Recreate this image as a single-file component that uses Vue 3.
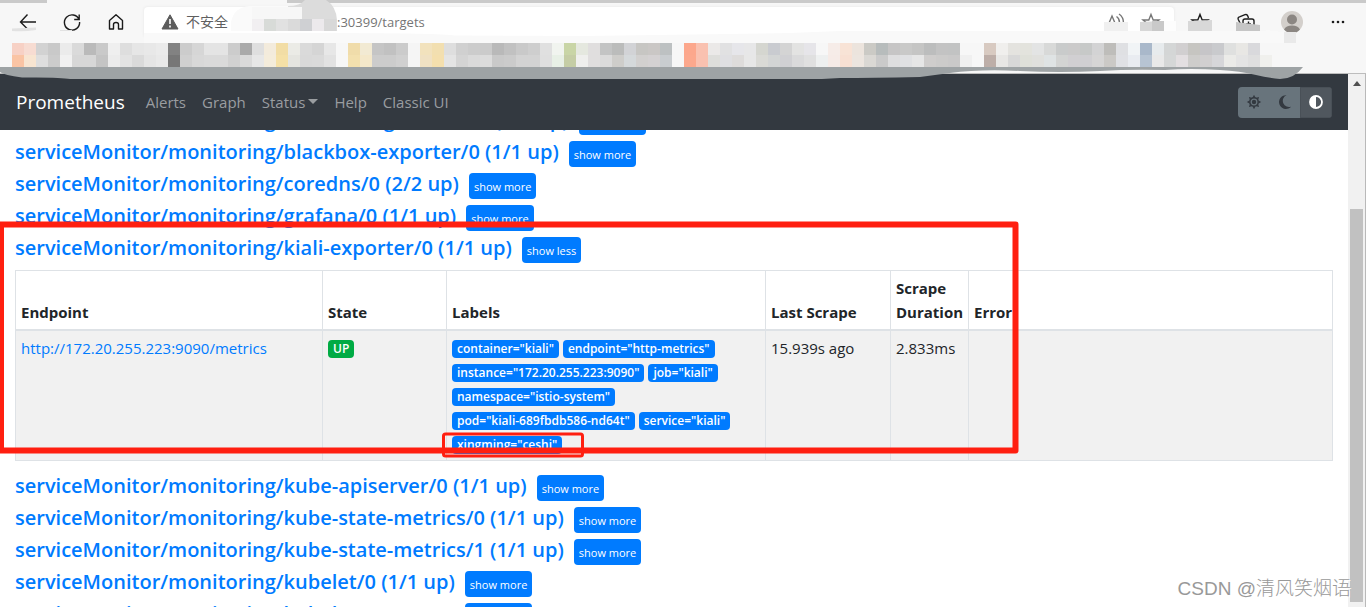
<script setup>
import { ref } from 'vue'

const address = ref(':30399/targets')

const topCells = (
  'f7d1c5 f7dcd2 d2d2d2 c9c9c9 ebebeb dadada bababa c9c9c9 efefef dedede e6e6e6 e8e8e8 ebebeb 828282 cccccc d6d6d6 e4e4e4 e4e4e4 cccccc aaaaaa dfdfdf f3ebdc f2dda5 ebebe6 dadada d5d5d5 e7e7e7 f7f7f7 f0dcaa f2ead3 c5c5c5 c1c1c1 cbcbcb f5f5f5 f2e2bd f2dfb0 dedede ' +
  'd0d0d0 cccccc cbcbcb b9b9b9 c1c1c1 c9c9c9 cecece e0e0e0 f1f4ef c9d5a6 e5e8df e0dede c3c4c4 bbbcbb d2d3d6 c7c6c3 cac7c5 bdc1c2 f7f7f7 fca78c f9c1b0 ebe9e8 e1e1e2 e6e6ea e7e7e8 d5d6d0 c9cbd0 d4d4d4 e3e3e2 e6e5e9 f7f7f7 f6ece8 f8e3d6 ece4dd cbcac5 b7bcbc c6c5c5 c9c9c8 ' +
  'c5c5c4 bcbdbd c3c3c3 c2c3c3 f7f7f7 f7f7f7 d8cac1 f0efed e4e3df e3e3dd e3e4e4 d8d9d8 c9cbcb cbcaca c7c9c8 d3d3d4 bebdba dfe0e3 f1f4f6 a9b8ca e7ebed d4d6d6 d1cfd0 c6c5c1 c6c5c8 c9cacd dfe0df e8e7e4 d9d9dc f7f7f7'
).split(' ')

const bottomCells = (
  'fac4a4 f8e5d1 dedede cccccc f1f1f1 d7d7d7 d7d7d7 c4c4c4 ececec e3e3e3 dadada e5e5e5 e9e9e9 777777 d0d0d0 d8d8d8 dadada dadada d1d1d1 dadada e7e7e7 f4ecdb f5e0a6 e5e5e0 d9d9d9 dadada e2e2e2 f7f7f7 f3e0ae f4e8ca cccccc cccccc d0d0d0 f5f5f5 f0e1c3 f4dfad e4e4e4 ' +
  'd4d4d4 dadada dcdcdc c9c9c9 cbcbcb d3d3d3 d3d3d3 dfdfdf e8f0e6 c5cda5 efefed e0dede dbdbdb cecdca d5d9db d2d0cf d4d1d2 c9cdd0 f7f7f7 fca88d f9c1b0 dededb dfdfe2 dedcdb e7e7e7 dadad6 d3d5d5 d0d0d3 dadadb e0e0e0 eef0f0 f6ebe7 f8e0d3 ece5df dad8d4 cacaca dededf e0e1e3 ' +
  'e6e6e6 cfcdcc cccbca cac9c9 f0f0f0 f7f7f7 bdaea8 e8e7e5 d8d8d8 dfe0d9 e0e0dd dfe3e4 d3d4d3 d1cfd2 d0cfd2 d6d5d5 cbc9c6 e0e1e5 e9ecf1 b7c4d3 e9e9e9 d5d7d7 e3dfe1 cecdcb d1cfd0 d6d6d9 ebebe8 e4e4e4 dfdfdf f0f0ed'
).split(' ')

const cells = [topCells, bottomCells].flatMap((row, r) =>
  row.map((c, i) => ({ x: i * 12, y: r * 12, fill: '#' + c }))
)

const blurCells = [
  [252, 19, '#f1eff1'], [264, 19, '#d8dbd8'], [276, 19, '#e1e1e1'], [288, 19, '#dadada'],
  [300, 19, '#cfd0d3'], [312, 19, '#ece9ec'], [324, 19, '#d8d8d8'],
].map(([x, y, fill]) => ({ x, y, fill }))

const pool = (name, up) => ({ name: `serviceMonitor/monitoring/${name}`, up })
const before = [
  pool('alertmanager-main/0', '1/1'),
  pool('blackbox-exporter/0', '1/1'),
  pool('coredns/0', '2/2'),
  pool('grafana/0', '1/1'),
]
const open = pool('kiali-exporter/0', '1/1')
const after = [
  pool('kube-apiserver/0', '1/1'),
  pool('kube-state-metrics/0', '1/1'),
  pool('kube-state-metrics/1', '1/1'),
  pool('kubelet/0', '1/1'),
  pool('kubelet/1', '1/1'),
]

const labels = [
  'container="kiali"',
  'endpoint="http-metrics"',
  'instance="172.20.255.223:9090"',
  'job="kiali"',
  'namespace="istio-system"',
  'pod="kiali-689fbdb586-nd64t"',
  'service="kiali"',
  'xingming="ceshi"',
]
const teeth = [0, 45, 90, 135, 180, 225, 270, 315]
</script>

<template>
  <div class="window">
    <header class="chrome">
      <div class="tabstrip"><span class="tab"></span></div>
      <div class="toolbar">
        <button class="tool" aria-label="Back">
          <svg width="20" height="20" viewBox="0 0 20 20"><path d="M18 10H3M9.500 2.500 2.500 10l7 7" /></svg>
        </button>
        <button class="tool" aria-label="Refresh">
          <svg width="20" height="20" viewBox="0 0 20 20"><path d="M17 7.500A7.600 7.600 0 1 0 17.600 10M17.200 2.500v5h-5" /></svg>
        </button>
        <button class="tool" aria-label="Home">
          <svg width="20" height="20" viewBox="0 0 20 20"><path d="M3.500 8.500 10 2.800l6.500 5.700V17h-4v-4.500q0-2-2.500-2t-2.500 2V17h-4z" stroke-linejoin="round" /></svg>
        </button>
        <div class="omnibox">
          <svg class="warn" width="18" height="16" viewBox="0 0 18 16"><path d="M9 .8 17 15H1z" fill="#5c5c5c" stroke="#5c5c5c" stroke-linejoin="round" /><path d="M9 5v5M9 11.500v2" stroke="#fff" stroke-width="1.600" /></svg>
          <label class="unsafe" for="address">不安全</label>
          <input id="address" v-model="address" class="address" type="text" spellcheck="false" />
          <button class="inner" aria-label="Read aloud">
            <svg width="20" height="20" viewBox="0 0 20 20"><path d="M1.500 17 7 4l5.500 13M4 12h6M11.500 4.500q3 2 3 6M14 2q4.500 3 4.500 9" /></svg>
          </button>
          <button class="inner" aria-label="Add favorite">
            <svg width="20" height="20" viewBox="0 0 20 20"><path d="M10 2.500 12.200 8H18l-4.500 3.800 1.700 5.700L10 14.200l-5.200 3.300 1.700-5.700L2 8h5.800z" /></svg>
          </button>
        </div>
        <button class="tool wide" aria-label="Favorites">
          <svg width="20" height="20" viewBox="0 0 20 20"><path d="M10 2.500 12.200 8H18l-4.500 3.800 1.700 5.700L10 14.200l-5.200 3.300 1.700-5.700L2 8h5.800z" /></svg>
        </button>
        <button class="tool wide" aria-label="Collections">
          <svg width="20" height="20" viewBox="0 0 20 20"><path d="M4.500 12 2.300 7.500Q1.500 5.500 3.500 4.800L9 2.700q2-.7 2.800 1.300l.7 2M7 16V9q0-2 2-2h7q2 0 2 2v6q0 2-2 2H9q-2 0-2-2M12.500 9.500v5M10 12h5" /></svg>
        </button>
        <button class="tool wide" aria-label="Profile">
          <svg width="24" height="24" viewBox="0 0 24 24"><circle cx="12" cy="12" r="11" fill="#d3cfcb" stroke="none" /><circle cx="12" cy="9.500" r="5" fill="#8b8682" stroke="none" /><path d="M4 19.500q2-4 8-4t8 4q-3 3.500-8 3.500t-8-3.500z" fill="#8b8682" stroke="none" /></svg>
        </button>
        <button class="tool wide" aria-label="Settings and more">
          <svg width="16" height="4" viewBox="0 0 16 4"><g fill="#1b1b1b" stroke="none"><circle cx="3" cy="2" r="1.300" /><circle cx="8" cy="2" r="1.300" /><circle cx="13" cy="2" r="1.300" /></g></svg>
        </button>
      </div>
      <div class="bookmarks">
        <svg width="1260" height="24" shape-rendering="crispEdges" aria-hidden="true">
          <rect v-for="(c, i) in cells" :key="i" :x="c.x" :y="c.y" width="12" height="12" :fill="c.fill" />
        </svg>
      </div>
      <svg class="smudges" width="1366" height="80" aria-hidden="true">
        <path d="M144 33H330Q440 33 455 35.500L585 36 790 33 840 31H1266V30L1290 33V43H144z" fill="#f9f9f9" />
        <path d="M231 31V22Q234 7 250 6H300V31z" fill="#fafafa" />
        <path d="M288 6Q300 6 305 0h21q10 6 11 20v11H290z" fill="#dcdcdc" />
        <path d="M252 7h50v12h-50z" fill="#f7f7f7" />
        <rect v-for="(c, i) in blurCells" :key="i" :x="c.x" :y="c.y" width="12" height="12" :fill="c.fill" />
        <path d="M12 28.500l24-1V30q-12 2-24 1zM60 30h12v1H60z" fill="#e2e2e2" />
        <path d="M1104 22h24v9h-24z" fill="#f0f0f0" />
        <path d="M1140 22l24-1v10h-24z" fill="#d7d7d7" />
        <path d="M1152 21h12v10h-12z" fill="#c9c9c9" />
        <path d="M1164 21h12v10h-12z" fill="#fdfdfd" />
        <path d="M1188 21l24-1v11h-24z" fill="#d8d8d8" />
        <path d="M1236 22l24 3v6h-24z" fill="#c6c6c6" />
        <path d="M1284 32h12v11h-12z" fill="#e9e9e9" />
        <path d="M0 67H1303Q1294 79 1280 79 1268 78 1256 75 1240 71 1220 70 1190 68 1165 70 1130 69 1100 71 1060 73 1020 71 980 69 950 73 935 75 920 77 870 78 840 78L822 79H70Q60 77 22 77.500 4 75 0 72z" fill="#9ea3a5" />
      </svg>
    </header>

    <div class="viewport">
      <main class="page">
        <nav class="navbar">
          <a class="brand" href="#">Prometheus</a>
          <a class="link" href="#">Alerts</a>
          <a class="link" href="#">Graph</a>
          <a class="link" href="#">Status<span class="caret"></span></a>
          <a class="link" href="#">Help</a>
          <a class="link" href="#">Classic UI</a>
          <div class="themes">
            <button class="theme" aria-label="Light theme">
              <svg width="16" height="16" viewBox="0 0 16 16">
                <circle cx="8" cy="8" r="4.200" fill="none" stroke="#333940" stroke-width="1.500" />
                <circle cx="8" cy="8" r="2.200" fill="#333940" />
                <path v-for="a in teeth" :key="a" d="M6.600 3.500 8 .8l1.400 2.700z" fill="#333940" :transform="`rotate(${a} 8 8)`" />
              </svg>
            </button>
            <button class="theme" aria-label="Dark theme">
              <svg width="16" height="16" viewBox="0 0 16 16"><path d="M9.500 1.200A6.900 6.900 0 1 0 14.300 12.400 6 6 0 0 1 9.500 1.200z" fill="#333940" /></svg>
            </button>
            <button class="theme active" aria-label="Browser theme">
              <svg width="16" height="16" viewBox="0 0 16 16"><circle cx="8" cy="8" r="6" fill="none" stroke="#fff" stroke-width="1.800" /><path d="M8 2a6 6 0 0 0 0 12z" fill="#fff" /></svg>
            </button>
          </div>
        </nav>

        <div class="scroll">
          <div class="content">
            <div v-for="p in before" :key="p.name" class="pool">
              <h3><a href="#">{{ p.name }} ({{ p.up }} up)</a></h3>
              <button class="toggle">show more</button>
            </div>
            <div class="pool">
              <h3><a href="#">{{ open.name }} ({{ open.up }} up)</a></h3>
              <button class="toggle">show less</button>
            </div>
            <table class="targets">
              <colgroup>
                <col class="c-endpoint" /><col class="c-state" /><col class="c-labels" /><col class="c-last" /><col class="c-duration" /><col />
              </colgroup>
              <thead>
                <tr><th>Endpoint</th><th>State</th><th>Labels</th><th>Last Scrape</th><th>Scrape Duration</th><th>Error</th></tr>
              </thead>
              <tbody>
                <tr>
                  <td><a href="#">http://172.20.255.223:9090/metrics</a></td>
                  <td><div class="badges"><span class="badge up">UP</span></div></td>
                  <td><div class="badges"><span v-for="l in labels" :key="l" class="badge">{{ l }}</span></div></td>
                  <td>15.939s ago</td>
                  <td>2.833ms</td>
                  <td></td>
                </tr>
              </tbody>
            </table>
            <div v-for="p in after" :key="p.name" class="pool">
              <h3><a href="#">{{ p.name }} ({{ p.up }} up)</a></h3>
              <button class="toggle">show more</button>
            </div>
          </div>
        </div>
      </main>
      <div class="scrollbar" aria-hidden="true">
        <svg width="10" height="5" viewBox="0 0 10 5"><path d="M5 0 9 5H1z" fill="#505050" /></svg>
        <div class="thumb"></div>
      </div>
    </div>

    <svg class="marks" width="1030" height="250" aria-hidden="true">
      <g fill="none" stroke="#ff1f10" stroke-linejoin="round">
        <path d="M1 4.500H1015.500V230.500H1z" stroke-width="6" />
        <rect x="443.500" y="214" width="139" height="22" rx="2" stroke-width="3" />
      </g>
    </svg>
    <div class="watermark">CSDN @清风笑烟语</div>
  </div>
</template>

<style>
html,
body {
  margin: 0;
  overflow: hidden;
}
</style>

<style scoped>
.window {
  position: relative;
  display: flex;
  flex-direction: column;
  height: 100vh;
  overflow: hidden;
  background: #fff;
  color: #212529;
  font: 15px/24px "Open Sans", "Noto Sans CJK SC", sans-serif;
}
a {
  color: #007bff;
  text-decoration: none;
}
button {
  border: 0;
  padding: 0;
  font-family: inherit;
  cursor: pointer;
}
.chrome {
  position: relative;
  z-index: 2;
  background: #f7f7f7;
  border-bottom: 1px solid #bdbdbd;
}
.tabstrip {
  height: 3px;
  background: #cacaca;
}
.tab {
  display: block;
  width: 240px;
  height: 3px;
  margin-left: 47px;
  background: #f7f7f7;
}
.toolbar {
  display: flex;
  align-items: center;
  height: 38px;
  padding: 0 5px 0 6px;
}
.tool,
.inner {
  display: flex;
  flex: none;
  align-items: center;
  justify-content: center;
  width: 44px;
  height: 30px;
  background: none;
}
.wide {
  width: 46px;
}
.inner {
  width: 36px;
}
.tool svg,
.inner svg {
  fill: none;
  stroke: #1b1b1b;
  stroke-width: 1.4;
}
.inner svg {
  stroke: #777;
}
.omnibox {
  display: flex;
  flex: 1;
  align-items: center;
  height: 30px;
  margin: 0 3px 0 6px;
  padding: 0 5px 0 17px;
  background: #fff;
  border-radius: 4px;
  box-shadow: 0 0 3px #e4e4e4;
}
.warn {
  flex: none;
}
.unsafe {
  margin: 0 109px 0 7px;
  color: #5f5f5f;
  font-size: 14px;
  white-space: nowrap;
}
.address {
  flex: 1;
  min-width: 0;
  padding: 0;
  border: 0;
  outline: 0;
  background: none;
  color: #757575;
  font: 13px/20px "Open Sans", sans-serif;
}
.bookmarks {
  height: 24px;
  margin-top: 2px;
  padding: 0 0 6px 12px;
  overflow: hidden;
}
.bookmarks svg {
  display: block;
}
.smudges {
  position: absolute;
  top: 0;
  left: 0;
  pointer-events: none;
}
.viewport {
  display: flex;
  flex: 1;
  min-height: 0;
}
.page {
  display: flex;
  flex: 1;
  flex-direction: column;
  min-width: 0;
}
.navbar {
  display: flex;
  flex: none;
  align-items: center;
  gap: 16px;
  height: 56px;
  padding: 0 16px;
  background: #333940;
  box-sizing: border-box;
}
.brand {
  margin-right: 5px;
  color: #fff;
  font-size: 19px;
}
.link {
  color: #9a9da0;
}
.caret {
  display: inline-block;
  margin-left: 3px;
  vertical-align: 4px;
  border: 5px solid transparent;
  border-top-color: #9a9da0;
  border-bottom: 0;
}
.themes {
  display: flex;
  margin-left: auto;
  overflow: hidden;
  border-radius: 4px;
}
.theme {
  display: flex;
  align-items: center;
  justify-content: center;
  width: 31px;
  height: 31px;
  background: #68747c;
}
.theme.active {
  width: 32px;
  background: #50575e;
  border: 1px solid #495057;
}
.scroll {
  flex: 1;
  min-height: 0;
  overflow: hidden;
}
.content {
  margin-top: -24px;
  padding: 0 15px;
}
.pool {
  display: flex;
  align-items: flex-start;
  gap: 10px;
  height: 32px;
}
h3 {
  margin: 0;
  font-size: 20px;
  font-weight: 600;
  line-height: 28px;
  white-space: nowrap;
}
.toggle {
  height: 26px;
  margin-top: 3px;
  padding: 1px 5px 0;
  border-radius: 4px;
  background: #007bff;
  color: #fff;
  font-size: 11px;
}
.targets {
  width: 100%;
  margin: 4px 0 11px;
  border-collapse: collapse;
  table-layout: fixed;
}
.c-endpoint {
  width: 307px;
}
.c-state {
  width: 124px;
}
.c-labels {
  width: 319px;
}
.c-last {
  width: 125px;
}
.c-duration {
  width: 78px;
}
th,
td {
  padding: 5px;
  border: 1px solid #dee2e6;
  text-align: left;
  vertical-align: top;
}
th {
  border-bottom-width: 2px;
  font-weight: 700;
  vertical-align: bottom;
}
tbody tr {
  background: #f1f1f1;
}
.badges {
  display: flex;
  flex-wrap: wrap;
  gap: 6px 4px;
  padding: 4px 0 1px;
}
.badge {
  padding: 0 5px;
  border-radius: 4px;
  background: #007bff;
  color: #fff;
  font-size: 12px;
  font-weight: 600;
  line-height: 18px;
  white-space: nowrap;
}
.up {
  background: #00ab44;
}
.scrollbar {
  display: flex;
  flex: none;
  flex-direction: column;
  align-items: center;
  width: 17px;
  padding: 7px 0 5px;
  background: #f1f1f1;
  border-right: 1px solid #b9b9b9;
  box-sizing: content-box;
}
.thumb {
  flex: 1;
  width: 13px;
  margin-top: 123px;
  background: #c1c1c1;
}
.marks {
  position: absolute;
  top: 220px;
  left: 0;
  z-index: 3;
  pointer-events: none;
}
.watermark {
  position: absolute;
  right: 15px;
  bottom: 4px;
  z-index: 4;
  color: #999;
  font: 300 19px/28px "Liberation Sans", "Noto Sans CJK SC", sans-serif;
  text-shadow: 1px 1px 0 #fff;
  white-space: nowrap;
}
</style>
